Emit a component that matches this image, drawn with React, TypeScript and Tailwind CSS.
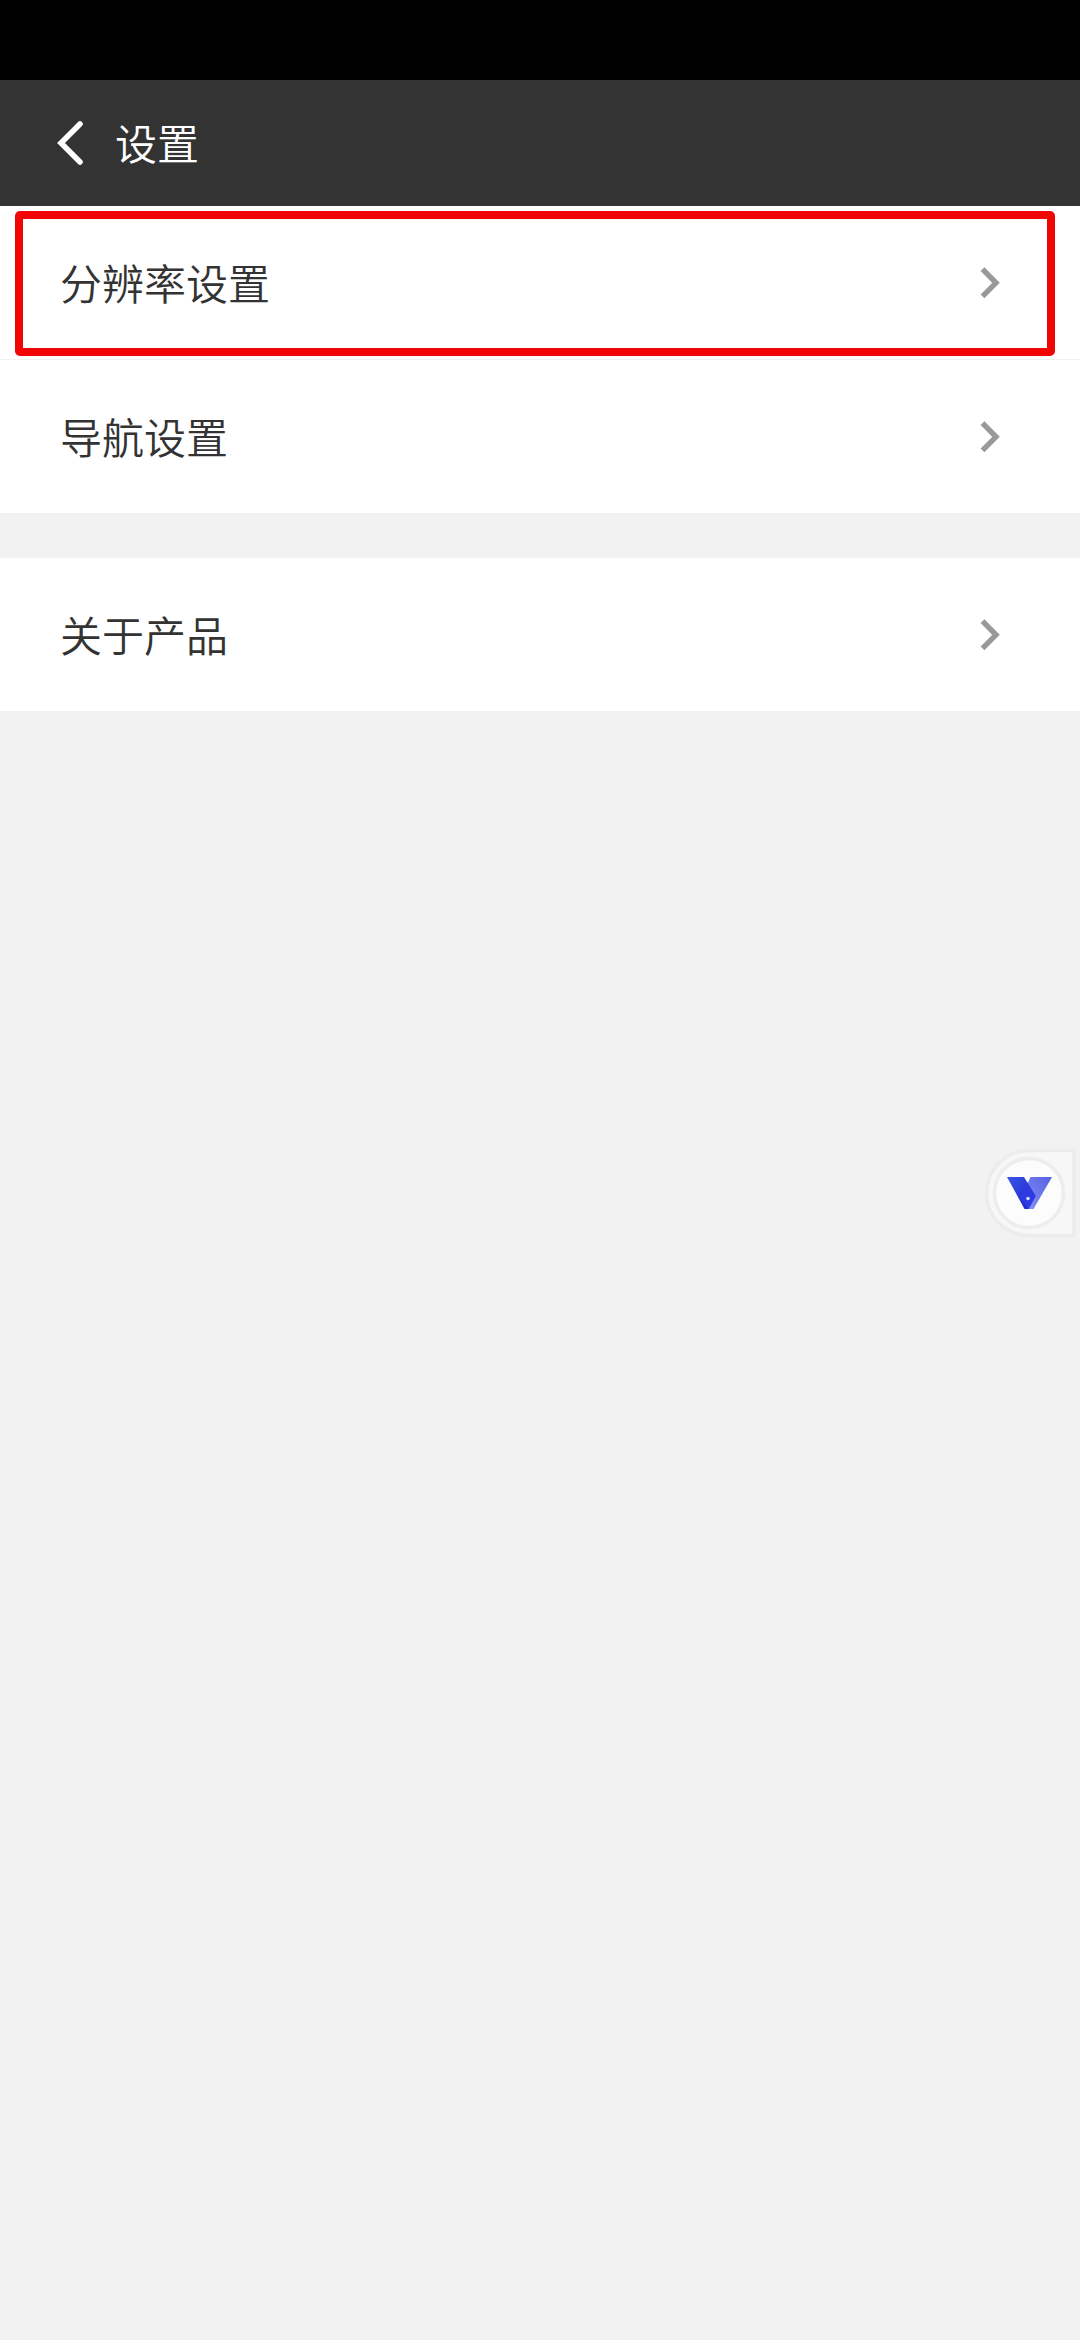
import React from 'react';

interface SettingItem {
  id: string;
  label: string;
}

const DISPLAY_ITEMS: SettingItem[] = [
  { id: 'resolution', label: '分辨率设置' },
  { id: 'navigation', label: '导航设置' },
];

const ABOUT_ITEMS: SettingItem[] = [
  { id: 'about', label: '关于产品' },
];

function ChevronIcon() {
  return (
    <svg width="24" height="36" viewBox="0 0 24 36" fill="none" className="shrink-0">
      <path d="M4.5 4.2 L18 17.8 L4.5 31.4" stroke="#999999" strokeWidth="5.4" />
    </svg>
  );
}

function SettingRow({ item }: { item: SettingItem }) {
  return (
    <button className="flex items-center justify-between w-full h-[153px] pl-[60px] pr-[78px] bg-white text-left">
      <span className="pb-0.5 text-[42px] leading-none font-[350] text-[#333333]">{item.label}</span>
      <ChevronIcon />
    </button>
  );
}

function FloatingBall() {
  return (
    <div className="absolute left-[985px] top-[1148px] w-[92px] h-[90px]">
      <svg width="92" height="90" viewBox="0 0 92 90" fill="none" className="overflow-visible">
        <defs>
          <linearGradient id="vLeft" x1="0" y1="0" x2="1" y2="1">
            <stop offset="0" stopColor="#3a55e8" />
            <stop offset="1" stopColor="#1c22c8" />
          </linearGradient>
          <linearGradient id="vRight" x1="1" y1="0" x2="0" y2="1">
            <stop offset="0" stopColor="#5560e0" />
            <stop offset="1" stopColor="#8a92f8" />
          </linearGradient>
        </defs>
        <path d="M44 2.5 H89 V87.5 H44 A42.5 42.5 0 0 1 44 2.5 Z" fill="#f7f7f7" stroke="#ececec" strokeWidth="3.5" />
        <circle cx="44" cy="45" r="34.5" fill="#fcfcfc" stroke="#ededed" strokeWidth="3.5" />
        <path d="M45.5 29 H67 L48.5 61 H41 L38 46 Z" fill="url(#vRight)" />
        <path d="M22 29 H39 L50.5 48 L43.5 61 H39.5 Z" fill="url(#vLeft)" />
        <path d="M42 34 L50.5 48 L43.5 61 L34 47 Z" fill="#2f3be0" />
        <circle cx="43" cy="50.5" r="1.8" fill="#d5dcff" />
      </svg>
    </div>
  );
}

export default function App() {
  return (
    <div className="relative flex flex-col w-[1080px] h-[2340px] overflow-hidden bg-[#f2f2f2] font-['Noto_Sans_CJK_SC',sans-serif]">
      {/* Status bar */}
      <div className="h-20 bg-black shrink-0" />

      <header className="flex items-center h-[126px] pl-[54px] gap-[29px] bg-[#333333] shrink-0">
        <svg width="32" height="48" viewBox="0 0 32 48" fill="none">
          <path d="M26 5 L7 24 L26 43" stroke="#ffffff" strokeWidth="5.5" strokeLinecap="round" />
        </svg>
        <h1 className="pb-0.5 text-[42px] leading-none font-[350] text-white">设置</h1>
      </header>

      <main className="flex flex-col gap-[45px]">
        <section className="flex flex-col gap-px">
          {DISPLAY_ITEMS.map(item => (
            <SettingRow key={item.id} item={item} />
          ))}
        </section>
        <section className="flex flex-col gap-px">
          {ABOUT_ITEMS.map(item => (
            <SettingRow key={item.id} item={item} />
          ))}
        </section>
      </main>

      {/* Highlight over the first row */}
      <div className="absolute left-[15px] top-[211px] w-[1040px] h-[145px] border-8 border-[#f20505] rounded-[5px] pointer-events-none" />

      <FloatingBall />
    </div>
  );
}
